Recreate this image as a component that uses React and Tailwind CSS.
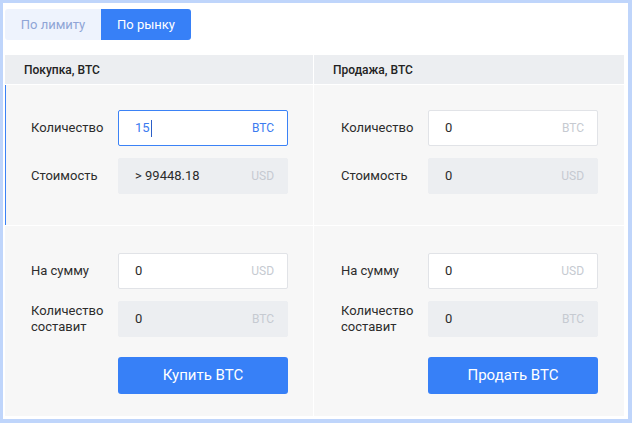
import React from "react";

const font = { fontFamily: "Roboto, 'Noto Sans', sans-serif" };

function Field({ value, unit, focused, disabled, caret }) {
  let box = "bg-white border border-[#e1e3e7]";
  if (focused) box = "bg-white border border-[#3b82f6]";
  if (disabled) box = "bg-[#eceef1] border border-[#eceef1]";
  return (
    <div className={`w-[170px] h-[36px] rounded-[2px] flex items-center justify-between pl-[16px] pr-[13px] ${box}`}>
      <div className={`flex items-center text-[13px] ${focused ? "text-[#3b7bf0]" : "text-[#2b2b2b]"}`}>
        {value}
        {caret && <span className="ml-[1px] w-px h-[17px] bg-[#2c5fc7]" />}
      </div>
      <span className={`text-[12px] ${focused ? "text-[#3b7bf0]" : "text-[#c6cad1]"}`}>{unit}</span>
    </div>
  );
}

function Row({ label, pad, children }) {
  return (
    <div className={`flex items-center ${pad}`}>
      <div className="w-[87px] text-[13px] leading-[16px] text-[#2d2d2d]">{label}</div>
      {children}
    </div>
  );
}

function Panel({ title, side, qty, cost, button, active }) {
  const left = side === "left";
  const pad = left ? "pl-[26px]" : "pl-[27px]";
  return (
    <div className={`${left ? "w-[308px]" : "flex-1"} flex flex-col gap-px`}>
      <div className="h-[29px] bg-[#eceef1] flex items-center pl-[19px] text-[12px] font-medium text-[#222]">
        {title}
      </div>
      <div className={`h-[140px] bg-[#f7f7f7] pt-[25px] flex flex-col gap-[12px] ${active ? "border-l border-[#3b82f6]" : ""}`}>
        <Row label="Количество" pad={active ? "pl-[25px]" : pad}>
          <Field value={qty} unit="BTC" focused={active} caret={active} />
        </Row>
        <Row label="Стоимость" pad={active ? "pl-[25px]" : pad}>
          <Field value={cost} unit="USD" disabled />
        </Row>
      </div>
      <div className="flex-1 bg-[#f7f7f7] pt-[27px] flex flex-col">
        <Row label="На сумму" pad={pad}>
          <Field value="0" unit="USD" />
        </Row>
        <div className="mt-[12px]">
          <Row label={<>Количество<br />составит</>} pad={pad}>
            <Field value="0" unit="BTC" disabled />
          </Row>
        </div>
        <div className={`mt-[20px] ${left ? "pl-[113px]" : "pl-[114px]"}`}>
          <button className="w-[170px] h-[37px] rounded-[3px] bg-[#3780f7] text-white text-[15px]">
            {button}
          </button>
        </div>
      </div>
    </div>
  );
}

export default function App() {
  return (
    <div
      style={font}
      className="w-[632px] h-[423px] border-l-[3px] border-t-[3px] border-r-4 border-b-4 border-[#bfd5fb] bg-white pl-[2px] pr-1 pt-[6px] pb-[3px] flex flex-col"
    >
      <div className="flex h-[31px]">
        <button className="w-[96px] bg-[#eef3fd] text-[#8fa5d6] text-[13px] rounded-l-[3px]">По лимиту</button>
        <button className="w-[90px] bg-[#3780f7] text-white text-[13px] rounded-r-[3px]">По рынку</button>
      </div>
      <div className="mt-[15px] flex-1 flex gap-px">
        <Panel side="left" title="Покупка, BTC" qty="15" cost="> 99448.18" button="Купить BTC" active />
        <Panel side="right" title="Продажа, BTC" qty="0" cost="0" button="Продать BTC" />
      </div>
    </div>
  );
}
